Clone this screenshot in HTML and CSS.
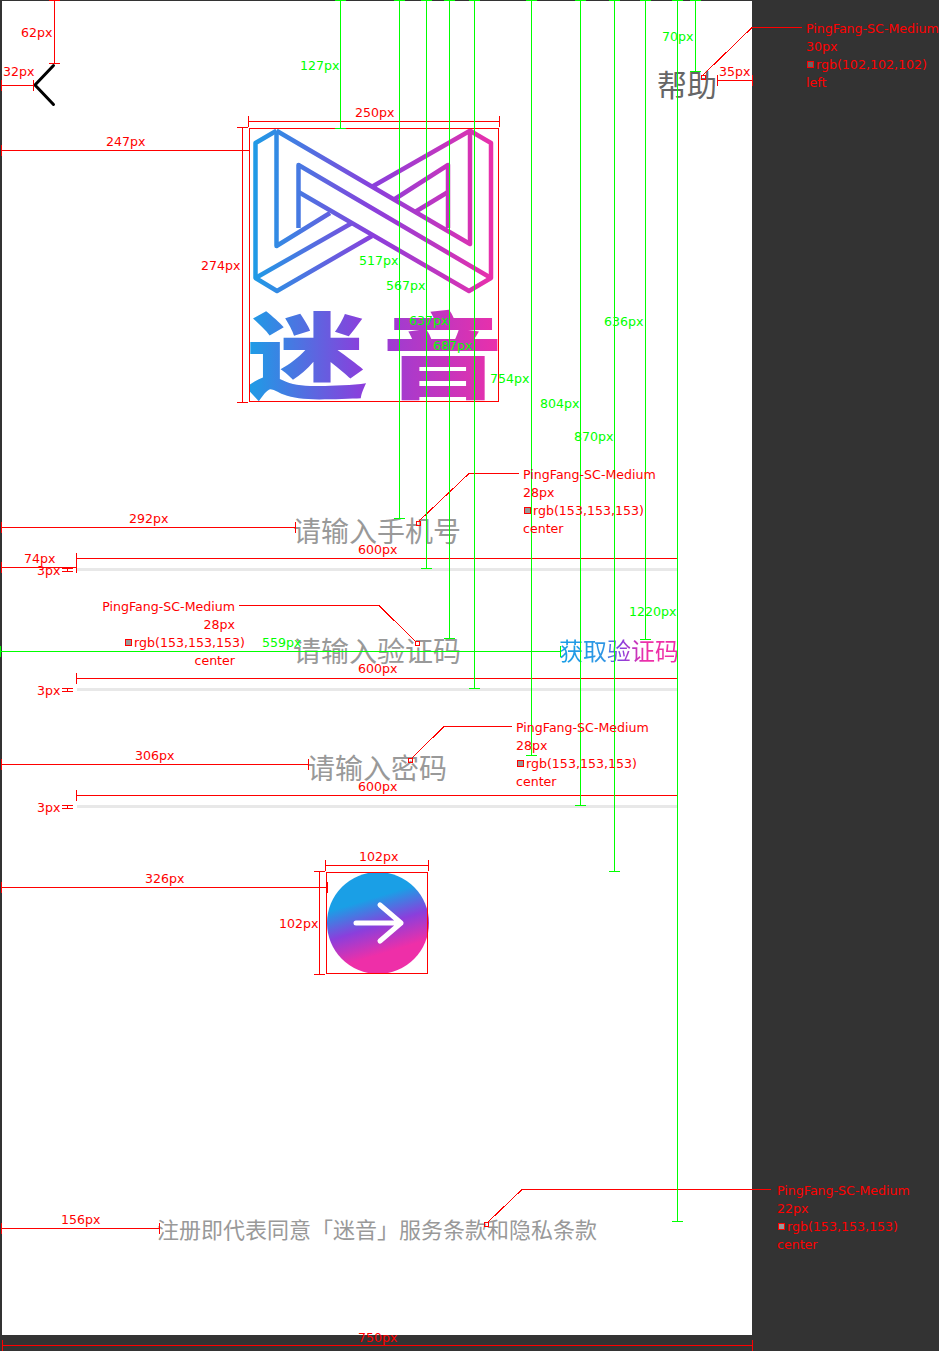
FILE: index.html
```html
<!DOCTYPE html>
<html lang="zh-CN">

<head>
    <meta charset="UTF-8">
    <meta name="viewport" content="width=device-width, initial-scale=1.0">
    <title>登录标注稿</title>
    <link rel="stylesheet" href="styles.css">
</head>

<body>

    <!-- Phone artboard -->
    <div class="artboard">
        <div class="topbar">
            <svg class="back" viewBox="0 0 22 42" width="22" height="42">
                <path d="M19.5 2.5L1 22L19.5 41.5" />
            </svg>
            <span class="help">帮助</span>
        </div>

        <!-- Logo -->
        <svg class="logo" viewBox="0 0 250 274" width="250" height="274">
            <defs>
                <linearGradient id="brand" gradientUnits="userSpaceOnUse" x1="0" y1="0" x2="250" y2="0">
                    <stop offset="0" stop-color="#1a9fe6" />
                    <stop offset="0.5" stop-color="#8a3fdc" />
                    <stop offset="1" stop-color="#ee2fa8" />
                </linearGradient>
                <linearGradient id="brand-text">
                    <stop offset="0" stop-color="#1a9fe6" />
                    <stop offset="0.45" stop-color="#8a3fdc" />
                    <stop offset="1" stop-color="#ee2fa8" />
                </linearGradient>
            </defs>
            <g class="logo-lines">
                <path d="M27.5 2.7L221 116V2.7L124.3 58" />
                <path d="M221 2.7L242 15V150L220 163L49.5 64" />
                <path d="M49.5 100V37L242 150" />
                <path d="M27.5 2.7V118L81 85" />
                <path d="M27.5 2.7L6.5 15V150L28 163L123 108" />
                <path d="M6.5 150L103 95" />
                <path d="M144.3 72L199 37V100" />
                <path d="M166 84L199 64" />
            </g>
            <text class="logo-word" transform="translate(-3 263) scale(1.19 .91)">迷<tspan dx="12">音</tspan></text>
        </svg>

        <!-- Form -->
        <div class="field">
            <span class="field-text">请输入手机号</span>
        </div>
        <div class="field field-code">
            <span class="field-text">请输入验证码</span>
            <span class="get-code">获取验证码</span>
        </div>
        <div class="field field-last">
            <span class="field-text">请输入密码</span>
        </div>

        <div class="submit">
            <svg viewBox="0 0 102 102" width="102" height="102">
                <path d="M29 51H74M53 33L74 51L53 69" />
            </svg>
        </div>

        <p class="terms">注册即代表同意「迷音」服务条款和隐私条款</p>
    </div>

    <!-- Redlines drawn over the design -->
    <svg class="redlines" viewBox="0 0 939 1351" width="939" height="1351">
        <g class="red">
            <path d="M54.5 1V63M49 .5H60M49 63.5H60" />
            <path d="M2 85.5H33M1.5 80V91M33.5 80V91" />
            <path d="M249 121.5H499M248.5 116V127M499.5 116V127" />
            <path d="M2 150.5H249M1.5 145V156" />
            <path d="M242.5 128V402M237 127.5H248M237 402.5H248" />
            <path d="M2 527.5H295M1.5 522V533M295.5 522V533" />
            <path d="M2 567.5H76M1.5 562V573M76.5 553V573" />
            <path d="M76 558.5H677M677.5 553V564" />
            <path d="M62 568.5H73M62 571.5H73M67.5 568V571" />
            <path d="M76 678.5H677M76.5 673V684M677.5 673V684" />
            <path d="M62 688.5H73M62 691.5H73M67.5 688V691" />
            <path d="M2 764.5H308M1.5 759V770M308.5 759V770" />
            <path d="M76 795.5H677M76.5 790V801M677.5 790V801" />
            <path d="M62 805.5H73M62 808.5H73M67.5 805V808" />
            <path d="M326 865.5H428M325.5 860V871M428.5 860V871" />
            <path d="M319.5 872V974M314 871.5H325M314 974.5H325" />
            <path d="M2 887.5H327M1.5 882V893M327.5 882V893" />
            <path d="M717 80.5H753M717.5 75V86M752.5 75V86" />
            <path d="M2 1228.5H159M1.5 1223V1234M159.5 1223V1234" />
            <path d="M2 1345.5H752M2.5 1340V1351M752.5 1340V1351" />

            <!-- Text leaders -->
            <path d="M703 75L752 27.5H802" />
            <path d="M419 521L469 473.5H519" />
            <path d="M416 642L379 605.5H239" />
            <path d="M412 758L444 726.5H512" />
            <path d="M488 1222L522 1189.5H771" />

            <rect class="anchor" x="249.5" y="128.5" width="249" height="273" />
            <rect class="anchor" x="326.5" y="872.5" width="101" height="101" />
            <rect class="anchor" x="701.5" y="75.5" width="4" height="4" />
            <rect class="anchor" x="416.5" y="521.5" width="4" height="4" />
            <rect class="anchor" x="415.5" y="641.5" width="4" height="4" />
            <rect class="anchor" x="408.5" y="758.5" width="4" height="4" />
            <rect class="anchor" x="484.5" y="1222.5" width="4" height="4" />
        </g>

        <g class="green">
            <path d="M340.5 1V128M335 .5H346M335 128.5H346" />
            <path d="M399.5 1V518M394 .5H405M394 518.5H405" />
            <path d="M426.5 1V568M421 .5H432M421 568.5H432" />
            <path d="M449.5 1V638M444 .5H455M444 638.5H455" />
            <path d="M474.5 1V688M469 .5H480M469 688.5H480" />
            <path d="M531.5 1V755M526 .5H537M526 755.5H537" />
            <path d="M580.5 1V805M575 .5H586M575 805.5H586" />
            <path d="M614.5 1V871M609 .5H620M609 871.5H620" />
            <path d="M645.5 1V639M640 .5H651M640 639.5H651" />
            <path d="M677.5 1V1221M672 .5H683M672 1221.5H683" />
            <path d="M695.5 1V71M690 .5H701M690 71.5H701" />
            <path d="M0 651.5H560M.5 646V657M560.5 646V657" />
        </g>

        <g class="red-text">
            <text x="21" y="33">62px</text>
            <text x="3" y="72">32px</text>
            <text x="355" y="113">250px</text>
            <text x="106" y="142">247px</text>
            <text x="201" y="266">274px</text>
            <text x="129" y="519">292px</text>
            <text x="24" y="559">74px</text>
            <text x="37" y="571">3px</text>
            <text x="358" y="550">600px</text>
            <text x="37" y="691">3px</text>
            <text x="358" y="669">600px</text>
            <text x="135" y="756">306px</text>
            <text x="358" y="787">600px</text>
            <text x="37" y="808">3px</text>
            <text x="359" y="857">102px</text>
            <text x="279" y="924">102px</text>
            <text x="145" y="879">326px</text>
            <text x="719" y="72">35px</text>
            <text x="61" y="1220">156px</text>
            <text x="358" y="1338">750px</text>

            <text x="806" y="29">PingFang-SC-Medium</text>
            <text x="806" y="47">30px</text>
            <text x="816" y="65">rgb(102,102,102)</text>
            <text x="806" y="83">left</text>

            <text x="523" y="475">PingFang-SC-Medium</text>
            <text x="523" y="493">28px</text>
            <text x="533" y="511">rgb(153,153,153)</text>
            <text x="523" y="529">center</text>

            <text class="end" x="235" y="607">PingFang-SC-Medium</text>
            <text class="end" x="235" y="625">28px</text>
            <text class="end" x="245" y="643">rgb(153,153,153)</text>
            <text class="end" x="235" y="661">center</text>

            <text x="516" y="728">PingFang-SC-Medium</text>
            <text x="516" y="746">28px</text>
            <text x="526" y="764">rgb(153,153,153)</text>
            <text x="516" y="782">center</text>

            <text x="777" y="1191">PingFang-SC-Medium</text>
            <text x="777" y="1209">22px</text>
            <text x="787" y="1227">rgb(153,153,153)</text>
            <text x="777" y="1245">center</text>
        </g>

        <g class="swatches">
            <rect class="swatch-dark" x="807.5" y="61.5" width="6" height="6" />
            <rect class="swatch-mid" x="524.5" y="507.5" width="6" height="6" />
            <rect class="swatch-mid" x="125.5" y="639.5" width="6" height="6" />
            <rect class="swatch-mid" x="517.5" y="760.5" width="6" height="6" />
            <rect class="swatch-mid" x="778.5" y="1223.5" width="6" height="6" />
        </g>

        <g class="green-text">
            <text x="300" y="66">127px</text>
            <text x="359" y="261">517px</text>
            <text x="386" y="286">567px</text>
            <text x="409" y="321">637px</text>
            <text x="433" y="346">687px</text>
            <text x="490" y="379">754px</text>
            <text x="540" y="404">804px</text>
            <text x="574" y="437">870px</text>
            <text x="604" y="322">636px</text>
            <text x="629" y="612">1220px</text>
            <text x="662" y="37">70px</text>
            <text x="262" y="643">559px</text>
        </g>
    </svg>

</body>

</html>
```

FILE: styles.css
```css
/* Global styles */
* {
    margin: 0;
    padding: 0;
    box-sizing: border-box;
}

body {
    position: relative;
    height: 1351px;
    padding: 1px 0 0 2px;
    overflow: hidden;
    background-color: #333;
    font-family: "Noto Sans CJK SC", "Liberation Sans", sans-serif;
}

/* Artboard */
.artboard {
    display: flex;
    flex-direction: column;
    align-items: center;
    width: 750px;
    height: 1334px;
    background-color: #fff;
}

/* Top bar */
.topbar {
    display: flex;
    justify-content: space-between;
    align-items: flex-start;
    width: 100%;
    padding: 62px 35px 0 32px;
}

.back {
    display: block;
    overflow: visible;
}

.back path {
    fill: none;
    stroke: #000;
    stroke-width: 3;
    stroke-linecap: round;
}

.help {
    margin-top: 5px;
    font-size: 30px;
    line-height: 30px;
    color: #666;
}

/* Logo */
.logo {
    display: block;
    flex: none;
    align-self: flex-start;
    margin: 23px 0 0 247px;
}

.logo-lines path {
    fill: none;
    stroke: url(#brand);
    stroke-width: 4.5;
    stroke-linejoin: round;
}

.logo-word {
    font-family: "Noto Sans CJK SC", sans-serif;
    font-size: 102px;
    font-weight: 900;
    fill: url(#brand-text);
}

/* Form fields */
.field {
    display: grid;
    grid-template-columns: 1fr auto 1fr;
    align-items: center;
    flex: none;
    width: 600px;
    margin-top: 114px;
    padding-bottom: 24px;
    border-bottom: 3px solid #e8e8e8;
}

.field-code {
    margin-top: 65px;
}

.field-last {
    margin-top: 62px;
}

.field-text {
    grid-column: 2;
    font-size: 28px;
    line-height: 28px;
    color: #999;
}

.get-code {
    grid-column: 3;
    justify-self: end;
    margin-right: -2px;
    font-size: 24px;
    line-height: 28px;
    color: transparent;
    background: linear-gradient(to right, #1a9fe6 0%, #2f95e4 38%, #8a3fdc 52%, #ee2fa8 72%);
    -webkit-background-clip: text;
    background-clip: text;
}

/* Submit button */
.submit {
    flex: none;
    width: 102px;
    height: 102px;
    margin: 64px 0 0 2px;
    border-radius: 50%;
    background: linear-gradient(163deg, #1a9fe6 30%, #8a3fdc 52%, #ee2fa8 74%);
}

.submit svg {
    display: block;
}

.submit path {
    fill: none;
    stroke: #fff;
    stroke-width: 5;
    stroke-linecap: round;
    stroke-linejoin: round;
}

/* Terms */
.terms {
    flex: none;
    margin-top: 239px;
    font-size: 22px;
    line-height: 30px;
    color: #999;
}

/* Redlines overlay */
.redlines {
    position: absolute;
    top: 0;
    left: 0;
    pointer-events: none;
}

.red path,
.green path {
    fill: none;
    stroke-width: 1;
}

.red path {
    stroke: #f00;
}

.green path {
    stroke: #0f0;
}

.red path,
.green path,
.anchor,
.swatches rect {
    shape-rendering: crispEdges;
}

.anchor {
    fill: none;
    stroke: #f00;
}

.red-text,
.green-text {
    transform: translateY(-1px);
}

.red-text text,
.green-text text {
    font-family: "DejaVu Sans", sans-serif;
    font-size: 12.6px;
    dominant-baseline: central;
}

.red-text text {
    fill: #f00;
}

.green-text text {
    fill: #0f0;
}

.red-text .end {
    text-anchor: end;
}

.swatches rect {
    stroke: #f00;
}

.swatch-dark {
    fill: #666;
}

.swatch-mid {
    fill: #999;
}
```
